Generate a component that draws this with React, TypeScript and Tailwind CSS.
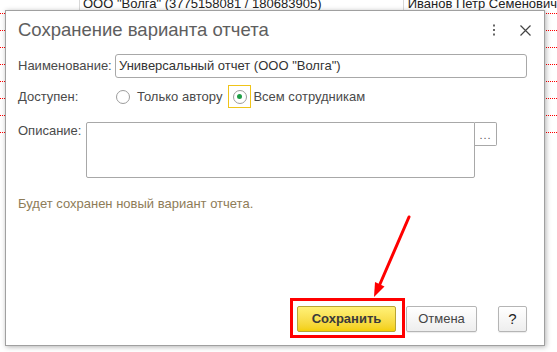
import React from "react";

const font = { fontFamily: '"Liberation Sans", Arial, sans-serif' };

function Radio({ checked }: { checked?: boolean }) {
  return (
    <span className="flex h-[14px] w-[14px] items-center justify-center rounded-full border border-[#9c9c9c] bg-white">
      {checked && <span className="h-[5px] w-[5px] rounded-full bg-[#1e9e46]" />}
    </span>
  );
}

export default function App() {
  const rows = [0, 1, 2, 3, 4, 5, 6, 7];
  return (
    <div className="relative h-[352px] w-[557px] overflow-hidden bg-white text-[#333]" style={font}>
      {/* background table */}
      <div className="-mt-[3px] flex flex-col">
        {rows.map((r) => (
          <div key={r} className="flex h-[17px] border-b border-dotted border-[#ff0000] text-[13px] leading-[14px]">
            {r === 0 && (
              <>
                <div className="w-[82px] border-r border-[#d8d8d8]" />
                <div className="w-[332px] border-r border-[#d8d8d8] pl-[3px] text-[#222]">ООО "Волга" (3775158081 / 180683905)</div>
                <div className="flex-1 pl-[4px] whitespace-nowrap text-[#222]">Иванов Петр Семенович</div>
              </>
            )}
          </div>
        ))}
      </div>

      {/* dialog */}
      <div className="absolute left-[5px] top-[10px] flex h-[336px] w-[540px] flex-col border border-[#a0a0a0] bg-white shadow-[1px_1px_5px_rgba(0,0,0,0.3)]">
        <div className="flex h-[38px] items-center pl-[12px] pr-[13px]">
          <div className="flex-1 text-[18.5px] text-[#5e5e5e]">Сохранение варианта отчета</div>
          <svg width="4" height="12" viewBox="0 0 4 12" className="mr-[24px]">
            <rect x="1" y="0.5" width="2" height="2" fill="#666" />
            <rect x="1" y="5" width="2" height="2" fill="#666" />
            <rect x="1" y="9.5" width="2" height="2" fill="#666" />
          </svg>
          <svg width="11" height="11" viewBox="0 0 11 11">
            <path d="M0.5 0.5 L10.5 10.5 M10.5 0.5 L0.5 10.5" stroke="#444" strokeWidth="1.2" />
          </svg>
        </div>

        <div className="mt-[5px] flex h-[24px] items-center pl-[12px] pr-[17px] text-[13px]">
          <div className="w-[97px] text-[#4a4a4a]">Наименование:</div>
          <div className="flex h-[24px] flex-1 items-center rounded-[3px] border border-[#a8a8a8] px-[3px] text-[#333]">
            Универсальный отчет (ООО "Волга")
          </div>
        </div>

        <div className="mt-[7px] flex h-[23px] items-center pl-[12px] pr-[17px] text-[13px]">
          <div className="w-[97px] text-[#4a4a4a]">Доступен:</div>
          <div className="ml-[1px]">
            <Radio />
          </div>
          <div className="ml-[7px] text-[#4a4a4a]">Только автору</div>
          <div className="ml-[6px] flex h-[23px] w-[23px] items-center justify-center border border-[#f0c419]">
            <Radio checked />
          </div>
          <div className="ml-[2px] text-[#4a4a4a]">Всем сотрудникам</div>
        </div>

        <div className="mt-[14px] flex items-start pl-[12px] pr-[17px] text-[13px]">
          <div className="w-[68px] pt-[1px] leading-[16px] text-[#4a4a4a]">Описание:</div>
          <div className="h-[56px] w-[389px] rounded-l-[2px] rounded-br-[2px] border border-[#a8a8a8]" />
          <div className="flex h-[24px] w-[22px] items-center justify-center rounded-r-[2px] border border-l-0 border-[#a8a8a8] pt-[2px] text-[11px] tracking-[1px] text-[#555]">
            ...
          </div>
        </div>

        <div className="mt-[18px] pl-[12px] text-[13px] leading-[16px] text-[#8e7c58]">
          Будет сохранен новый вариант отчета.
        </div>

        <div className="mb-[13px] mt-auto flex items-center justify-end pr-[17px] text-[13px]">
          <div className="relative">
            <div className="flex h-[26px] w-[99px] items-center justify-center rounded-[2px] border border-[#b9a533] bg-gradient-to-b from-[#fff176] to-[#f3cf00] text-[13px] font-bold text-[#3a3a3a]">
              Сохранить
            </div>
            <div className="absolute -bottom-[6px] -left-[7px] -right-[9px] -top-[8px] border-[3px] border-[#ff0000]" />
          </div>
          <div className="ml-[10px] flex h-[26px] w-[71px] items-center justify-center rounded-[2px] border border-[#b5b5b5] bg-gradient-to-b from-white to-[#eeeeee] text-[#444] shadow-[0_1px_1px_rgba(0,0,0,0.08)]">
            Отмена
          </div>
          <div className="ml-[21px] flex h-[26px] w-[29px] items-center justify-center rounded-[2px] border border-[#b5b5b5] bg-gradient-to-b from-white to-[#eeeeee] text-[15px] text-[#222] shadow-[0_1px_1px_rgba(0,0,0,0.08)]">
            ?
          </div>
        </div>
      </div>

      {/* arrow */}
      <svg className="pointer-events-none absolute left-0 top-0" width="557" height="352" viewBox="0 0 557 352">
        <line x1="409" y1="217" x2="380" y2="284" stroke="#ff0000" strokeWidth="3" strokeLinecap="round" />
        <polygon points="374,297 384.5,286.5 375,282" fill="#ff0000" />
      </svg>
    </div>
  );
}
